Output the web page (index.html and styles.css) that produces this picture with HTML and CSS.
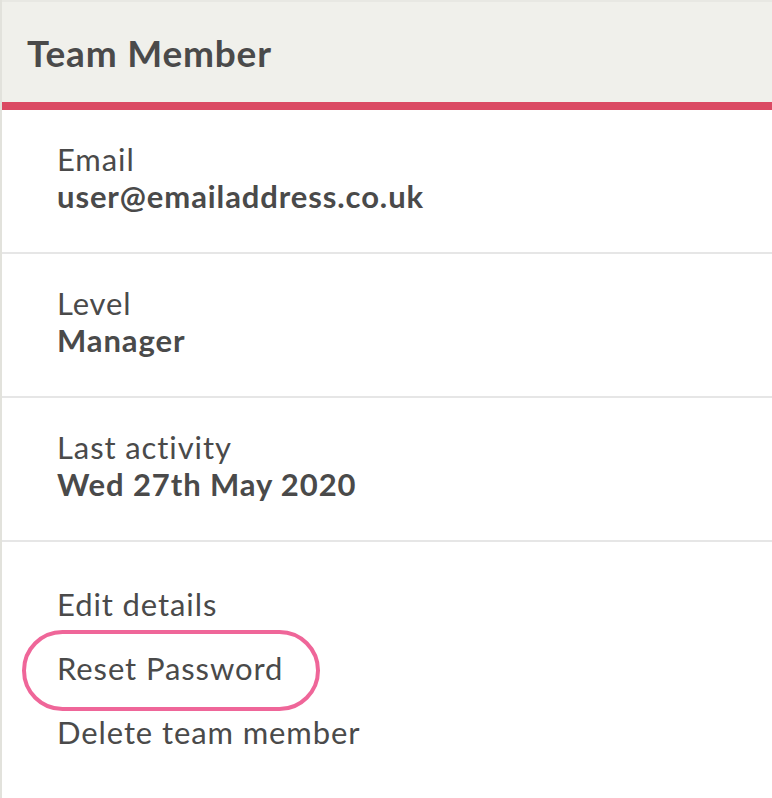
FILE: index.html
```html
<!DOCTYPE html>
<html lang="en">
<head>
<meta charset="utf-8">
<title>Team Member</title>
<link rel="stylesheet" href="styles.css">
</head>
<body>
<div class="panel">
  <header class="panel-header">
    <h1 class="panel-title">Team Member</h1>
  </header>
  <section class="field">
    <div class="field-label">Email</div>
    <div class="field-value">user@emailaddress.co.uk</div>
  </section>
  <section class="field">
    <div class="field-label">Level</div>
    <div class="field-value">Manager</div>
  </section>
  <section class="field">
    <div class="field-label">Last activity</div>
    <div class="field-value">Wed 27th May 2020</div>
  </section>
  <section class="actions">
    <div class="action">Edit details</div>
    <div class="action"><span class="highlight">Reset Password</span></div>
    <div class="action">Delete team member</div>
  </section>
</div>
</body>
</html>
```
FILE: styles.css
```css
html, body {
  margin: 0;
  padding: 0;
  background: #ffffff;
}
body {
  font-family: Lato, "Open Sans", Arial, sans-serif;
  color: #4a4a4a;
}
.panel {
  border-left: 2px solid #e2e2dc;
  min-height: 798px;
  box-sizing: border-box;
}
.panel-header {
  background: #f0f0eb;
  border-top: 2px solid #e8e8e3;
  border-bottom: 8px solid #db4a63;
  height: 100px;
  box-sizing: content-box;
  display: flex;
  align-items: center;
  padding-left: 25px;
}
.panel-title {
  margin: 0;
  font-size: 37px;
  font-weight: 700;
  letter-spacing: 0.8px;
  line-height: 1;
  color: #4a4a4a;
}
.field {
  padding: 31px 0 37px 55px;
  border-bottom: 2px solid #e6e6e6;
  font-size: 31px;
  letter-spacing: 0.9px;
  line-height: 37px;
}
.field-label {
  font-weight: 400;
}
.field-value {
  font-weight: 700;
}
.actions {
  padding: 30px 0 0 55px;
  font-size: 31px;
  letter-spacing: 0.9px;
  line-height: 64px;
}
.highlight {
  position: relative;
  display: inline-block;
}
.highlight::after {
  content: "";
  position: absolute;
  top: -6px;
  bottom: -11px;
  left: -35px;
  right: -37px;
  border: 4px solid #ef6699;
  border-radius: 42px;
}
```
